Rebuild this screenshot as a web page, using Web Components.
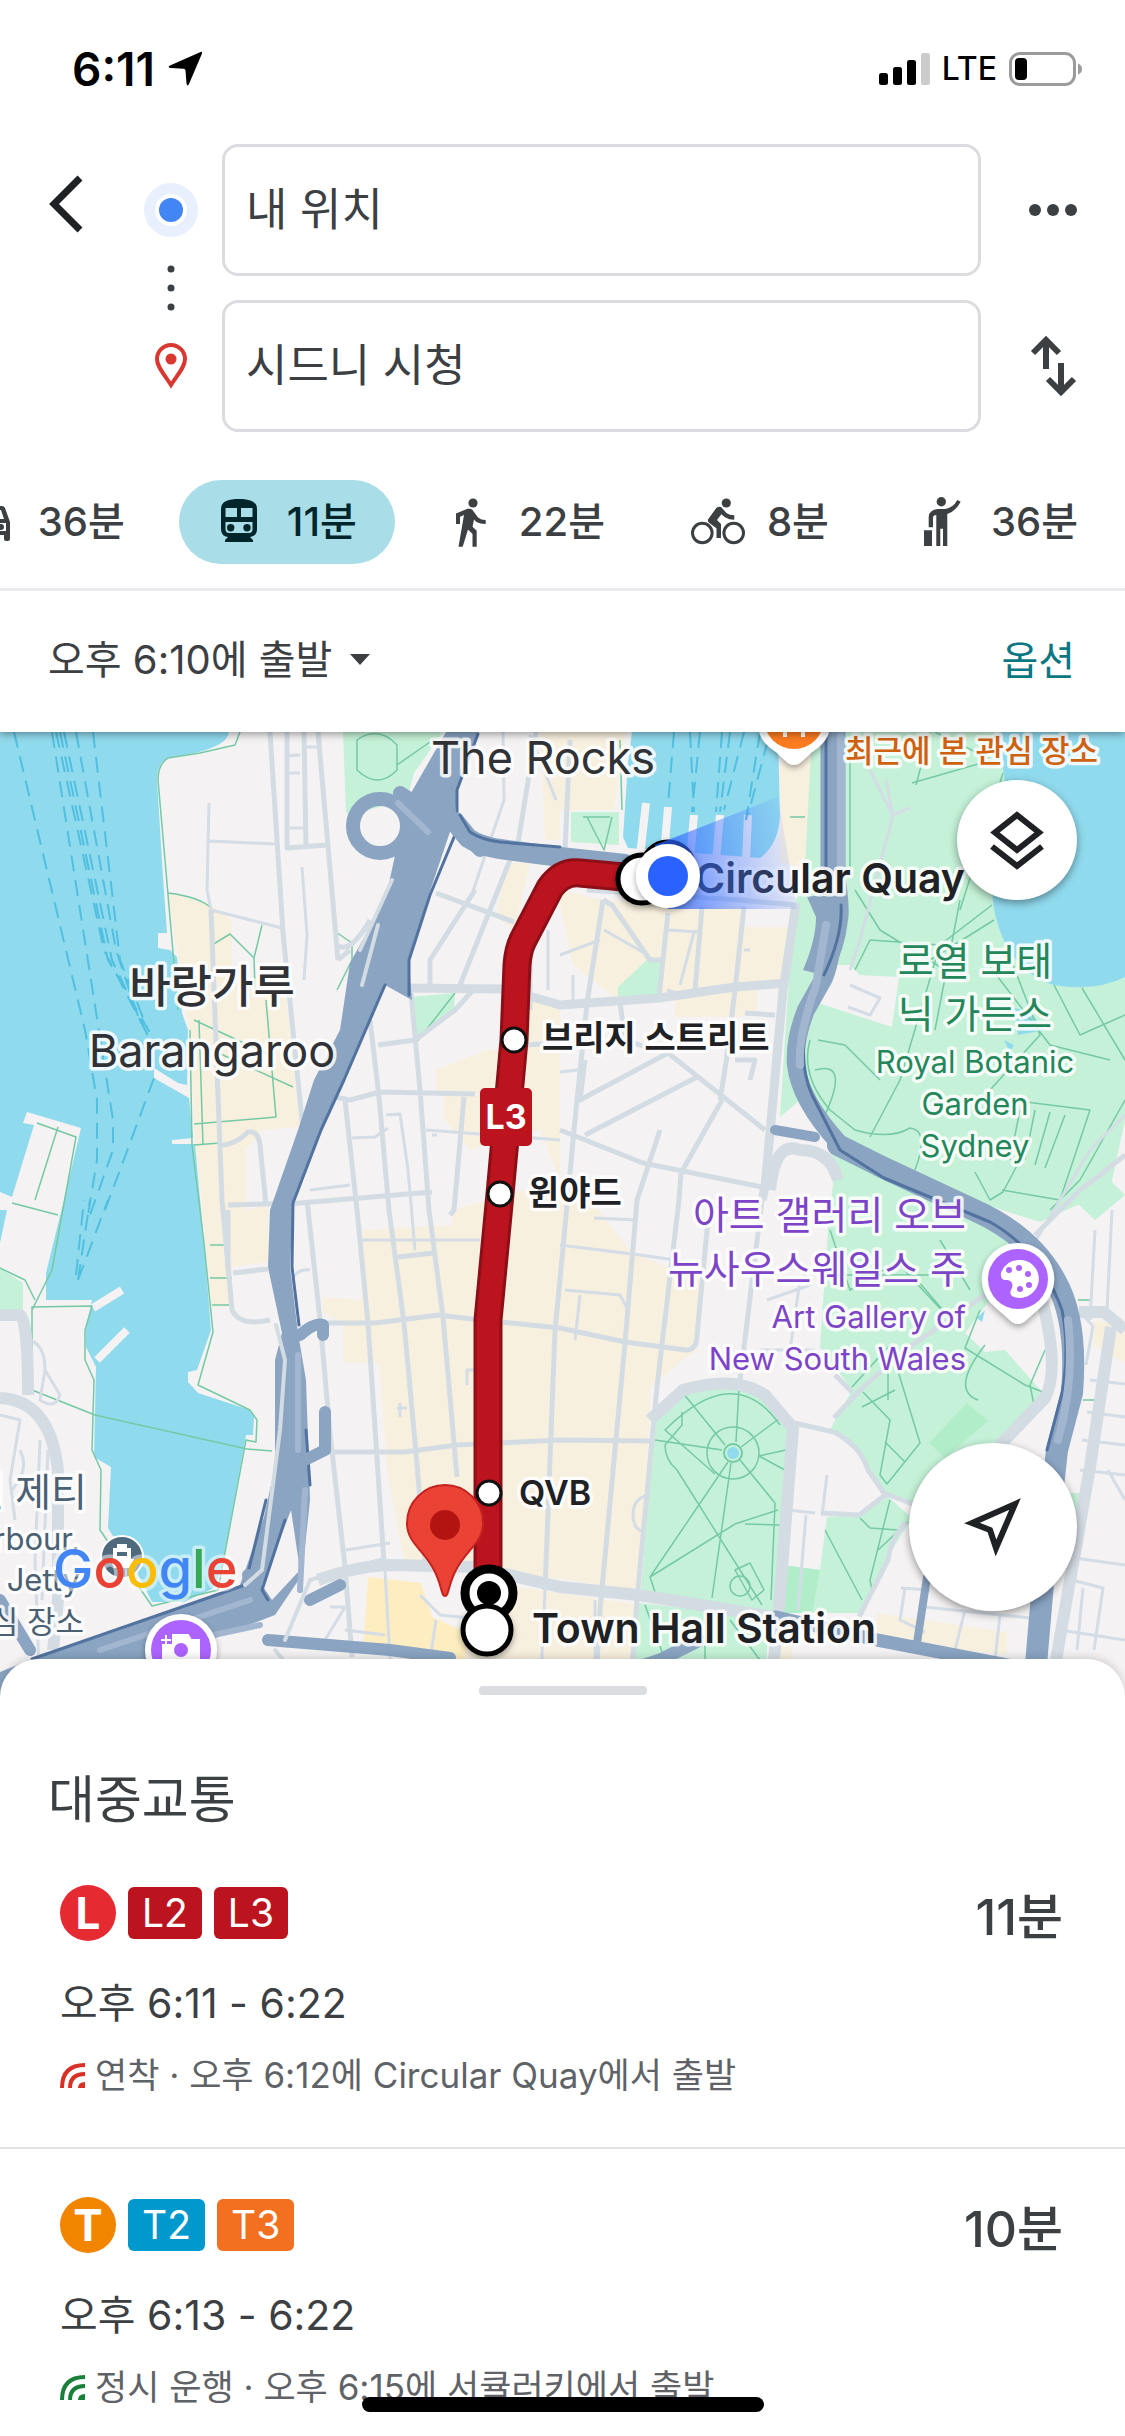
<!DOCTYPE html>
<html lang="ko">
<head>
<meta charset="utf-8">
<meta name="viewport" content="width=device-width, initial-scale=1">
<title>대중교통 길찾기</title>
<style>
	html, body { margin: 0; height: 100%; background: #fff; }
	body { font-family: Inter, "Noto Sans CJK KR", sans-serif; color: #3c4043; }
</style>
</head>
<body>
<transit-app>
	<status-bar slot="top" time="6:11" network="LTE"></status-bar>
	<trip-header slot="top" from="내 위치" to="시드니 시청"></trip-header>
	<mode-bar slot="top">
		<mode-chip icon="car">36분</mode-chip>
		<mode-chip icon="train" selected>11분</mode-chip>
		<mode-chip icon="walk">22분</mode-chip>
		<mode-chip icon="bike">8분</mode-chip>
		<mode-chip icon="hail">36분</mode-chip>
	</mode-bar>
	<depart-bar slot="top" when="오후 6:10에 출발">옵션</depart-bar>
	<route-map slot="map"></route-map>
	<result-sheet slot="sheet" heading="대중교통">
		<route-option letter="L" color="#e62a32" lines="L2:#bc141f,L3:#bc141f" duration="11분" live="#d93025">
			<span slot="time">오후 6:11 - 6:22</span>
			연착 · 오후 6:12에 Circular Quay에서 출발
		</route-option>
		<route-option letter="T" color="#f18500" lines="T2:#0098cd,T3:#f37021" duration="10분" live="#188038">
			<span slot="time">오후 6:13 - 6:22</span>
			정시 운행 · 오후 6:15에 서큘러키에서 출발
		</route-option>
	</result-sheet>
</transit-app>

<script>
const base = `
	:host, *, *::before, *::after { box-sizing: border-box; }
	button, input, select {
		font: inherit;
		color: inherit;
		background: none;
		border: none;
		margin: 0;
		padding: 0;
	}
	button { cursor: pointer; }
	svg { display: block; flex: none; }
`;

class TransitApp extends HTMLElement {
	constructor() {
		super();
		this.attachShadow({ mode: 'open' });
		this.shadowRoot.innerHTML = `
		<style>
			${base}
			:host {
				display: flex;
				flex-direction: column;
				position: relative;
				min-height: 100%;
				overflow: hidden;
			}
			.top { position: relative; z-index: 1; background: #fff; box-shadow: 0 2px 8px rgba(0, 0, 0, .4); }
			.map { flex: 1; display: flex; }
			.sheet { position: relative; margin-top: -40px; }
			.home {
				position: absolute;
				bottom: 24px;
				left: 50%;
				width: 402px;
				height: 15px;
				margin-left: -201px;
				border-radius: 8px;
				background: #000;
			}
		</style>
		<div class="top"><slot name="top"></slot></div>
		<div class="map"><slot name="map"></slot></div>
		<div class="sheet"><slot name="sheet"></slot></div>
		<div class="home"></div>
		`;
	}
}

class StatusBar extends HTMLElement {
	constructor() {
		super();
		this.attachShadow({ mode: 'open' });
	}

	connectedCallback() {
		this.shadowRoot.innerHTML = `
		<style>
			${base}
			:host {
				display: flex;
				align-items: center;
				gap: 12px;
				padding: 44px 42px 0 72px;
				line-height: 50px;
				color: #000;
			}
			.time { font-size: 46px; font-weight: 600; }
			.net { font-size: 32px; font-weight: 500; }
			.space { flex: 1; }
		</style>
		<span class="time">${this.getAttribute('time')}</span>
		<svg width="36" height="36" viewBox="0 0 36 36"><path d="M33 1.2Q36 0 34.8 3L22 33Q20.5 36 19.5 32.5L18.5 19.5Q18.4 17.8 16.7 17.7L3.5 17Q0 16.3 3 14.6Z"/></svg>
		<span class="space"></span>
		<svg width="51" height="34" viewBox="0 0 51 34">
			<rect y="21" width="9" height="12" rx="2.5"/>
			<rect x="14" y="15" width="9" height="18" rx="2.5"/>
			<rect x="28" y="8" width="9" height="25" rx="2.5"/>
			<rect x="42" y="1" width="9" height="32" rx="2.5" fill="#ccc"/>
		</svg>
		<span class="net">${this.getAttribute('network')}</span>
		<svg width="74" height="34" viewBox="0 0 74 34">
			<rect x="1.5" y="1.5" width="64" height="31" rx="9.5" fill="none" stroke="#9b9b9b" stroke-width="3"/>
			<rect x="6" y="6" width="12" height="22" rx="4"/>
			<path d="M69 11.5q4 1.5 4 5.5t-4 5.5z" fill="#9b9b9b"/>
		</svg>
		`;
	}
}

class TripHeader extends HTMLElement {
	constructor() {
		super();
		this.attachShadow({ mode: 'open' });
	}

	connectedCallback() {
		this.shadowRoot.innerHTML = `
		<style>
			${base}
			:host {
				display: grid;
				grid-template-columns: 120px 102px 1fr 144px;
				grid-template-rows: 132px 132px;
				row-gap: 24px;
				padding-top: 50px;
			}
			button { display: grid; place-items: center; }
			.rail { grid-column: 2; grid-row: 1 / 3; }
			input {
				min-width: 0;
				padding: 0 21px 8px;
				font-size: 45px;
				border: 3px solid #dadce0;
				border-radius: 16px;
				outline: none;
			}
			.back { grid-area: 1 / 1; }
			.from { grid-area: 1 / 3; }
			.more { grid-area: 1 / 4; }
			.to { grid-area: 2 / 3; }
			.swap { grid-area: 2 / 4; }
		</style>
		<button class="back" aria-label="뒤로">
			<svg width="60" height="72" viewBox="0 0 60 72"><path d="M50 4L24 30L50 56" fill="none" stroke="#202124" stroke-width="7"/></svg>
		</button>
		<svg class="rail" width="102" height="288" viewBox="0 0 102 288">
			<circle cx="51" cy="66" r="27" fill="#e8f0fe"/>
			<circle cx="51" cy="66" r="16" fill="#fff"/>
			<circle cx="51" cy="66" r="12" fill="#4285f4"/>
			<g fill="#3c4043"><circle cx="51" cy="125" r="3.5"/><circle cx="51" cy="144" r="3.5"/><circle cx="51" cy="163" r="3.5"/></g>
			<path d="M51 241C44 230 37 223 37 215A14 14 0 0 1 65 215C65 223 58 230 51 241Z" fill="none" stroke="#d93830" stroke-width="4"/>
			<circle cx="51" cy="215" r="5.5" fill="#d93830"/>
		</svg>
		<input class="from" aria-label="출발지" value="${this.getAttribute('from')}">
		<button class="more" aria-label="더보기">
			<svg width="50" height="14" viewBox="0 0 50 14" fill="#3c4043"><circle cx="7" cy="7" r="6"/><circle cx="25" cy="7" r="6"/><circle cx="43" cy="7" r="6"/></svg>
		</button>
		<input class="to" aria-label="도착지" value="${this.getAttribute('to')}">
		<button class="swap" aria-label="출발지와 도착지 바꾸기">
			<svg width="48" height="62" viewBox="0 0 48 62" fill="none" stroke="#3c4043" stroke-width="6"><path d="M17 34V6M4 18L17 5L30 18M32 28V56M19 44L32 57L45 44"/></svg>
		</button>
		`;
	}
}

class ModeBar extends HTMLElement {
	constructor() {
		super();
		this.attachShadow({ mode: 'open' });
		this.shadowRoot.innerHTML = `
		<style>
			:host {
				display: flex;
				justify-content: flex-end;
				gap: 16px;
				padding: 48px 9px 24px 0;
				border-bottom: 3px solid #e8eaed;
				overflow: hidden;
			}
		</style>
		<slot></slot>
		`;
	}
}

const modeIcons = {
	car: `<path fill-rule="evenodd" d="M14 11H40Q42 11 43 13L48 27V44Q48 46 46 46H44Q42 46 42 44V40H12V44Q12 46 10 46H8Q6 46 6 44V27L11 13Q12 11 14 11ZM15 15L12 24H42L39 15ZM10 28V36H44V28Z"/><circle cx="16" cy="32" r="3"/><circle cx="39" cy="32" r="3"/>`,
	train: `<path fill-rule="evenodd" d="M28 4C38 4 46 6 46 14V34Q46 41 39 42L42 45V47H14V45L17 42Q10 41 10 34V14C10 6 18 4 28 4ZM14.5 13V22H26V13ZM30 13V22H41.5V13ZM14.5 27V34Q14.5 38 18 38H38Q41.5 38 41.5 34V27Z"/><circle cx="19.7" cy="32.7" r="3.7"/><circle cx="36" cy="32.7" r="3.7"/>`,
	walk: `<circle cx="30" cy="8" r="4.6"/><path d="M13 29V18.5L24.5 13.7H27.5Q29.5 14 31 17L35 22.5Q38 25 42.7 25V29Q37 29 33.5 27L31 24.5L29.5 31.7L33.7 35.7V51.7H29.5V39L25 34.5L19.7 51.7H15.5L21 20L17 21.7V29Z"/>`,
	bike: `<circle cx="11.3" cy="38" r="9.8" fill="none" stroke="currentColor" stroke-width="3"/><circle cx="42.7" cy="38" r="9.8" fill="none" stroke="currentColor" stroke-width="3"/><circle cx="35.3" cy="8" r="4.6"/><path d="M17.3 24L25.3 13Q27.5 11 30 12L35.7 18.3Q38.5 20.3 43.3 20.3V24.8Q38 24.8 34 22.3L30.3 19.3L26 25L30 29V43H25.5V33.3L18 27.7Q16 26 17.3 24Z"/>`,
	hail: `<circle cx="26.3" cy="6.7" r="4.7"/><path d="M9 35.3H17V51H9ZM23 14H30Q38 13 42.3 5L45.7 6.7Q41 16 32.3 19V51H28V33.7H25.3V51H21.3V20Q18 20 18 23.3V32.3H13.7V21.7Q14 15 23 14Z"/>`
};

class ModeChip extends HTMLElement {
	constructor() {
		super();
		this.attachShadow({ mode: 'open' });
	}

	connectedCallback() {
		const selected = this.hasAttribute('selected');
		this.shadowRoot.innerHTML = `
		<style>
			${base}
			:host { display: block; flex: none; }
			button {
				display: flex;
				align-items: center;
				gap: 22px;
				height: 84px;
				padding: 0 38px 0 32px;
				border-radius: 42px;
				font-size: 40px;
				font-weight: 500;
				white-space: nowrap;
			}
			button[aria-pressed=true] { background: #a9dee8; color: #00262b; }
			.label { padding-bottom: 6px; }
		</style>
		<button aria-pressed="${selected}">
			<svg width="54" height="54" viewBox="0 0 54 54" fill="currentColor">${modeIcons[this.getAttribute('icon')]}</svg>
			<span class="label"><slot></slot></span>
		</button>
		`;
	}
}

class DepartBar extends HTMLElement {
	constructor() {
		super();
		this.attachShadow({ mode: 'open' });
	}

	connectedCallback() {
		this.shadowRoot.innerHTML = `
		<style>
			${base}
			:host {
				display: flex;
				align-items: center;
				justify-content: space-between;
				height: 141px;
				padding: 0 50px 4px 48px;
				font-size: 40px;
			}
			label { display: flex; align-items: center; gap: 16px; }
			select { appearance: none; outline: none; }
			.options { color: #0b7783; padding-bottom: 4px; }
		</style>
		<label>
			<select aria-label="출발 시간"><option>${this.getAttribute('when')}</option></select>
			<svg width="22" height="12" viewBox="0 0 22 12"><path d="M1 0H21L11 11Z" fill="#3c4043"/></svg>
		</label>
		<button class="options"><slot></slot></button>
		`;
	}
}

// the drawing uses page units, so its origin sits at y = 732
class RouteMap extends HTMLElement {
	constructor() {
		super();
		this.attachShadow({ mode: 'open' });
		this.shadowRoot.innerHTML = `
		<style>
			${base}
			:host { display: block; position: relative; flex: 1; min-height: 600px; background: #f4f2f3; }
			.canvas { position: absolute; inset: 0; width: 100%; height: 100%; }
			.fab {
				position: absolute;
				right: 48px;
				display: grid;
				place-items: center;
				border-radius: 50%;
				background: #fff;
				box-shadow: 0 3px 8px rgba(0, 0, 0, .4);
			}
			.layers { top: 48px; width: 120px; height: 120px; }
			.locate { bottom: 88px; width: 168px; height: 168px; }
			.water { fill: #90daee; }
			.park { fill: #c4f1d7; }
			.shops { fill: #f8f0df; }
			.roads, .minor, .major, .trails, .ferry, .highway { fill: none; stroke-linejoin: round; }
			.roads { stroke: #d4dce3; stroke-width: 5; }
			.minor { stroke: #d4dce6; stroke-width: 3; }
			.major { stroke: #d4dce3; stroke-width: 12; }
			.trails { stroke: #75c9a4; stroke-width: 1.5; }
			.ferry { stroke: #50bfe0; stroke-width: 2; stroke-dasharray: 16 9; }
			.highway { stroke: #8aa4c2; stroke-linecap: round; }
			.edge { stroke: #52739f; }
			.lane { stroke: #a2b6d0; }
			text {
				paint-order: stroke;
				stroke: #fff;
				stroke-opacity: .85;
				stroke-width: 7px;
				stroke-linejoin: round;
				fill: #303236;
			}
			.place { font-size: 45px; text-anchor: middle; }
			.ko.place { font-size: 45px; font-weight: 500; }
			.stop { font-size: 34px; font-weight: 600; fill: #202124; }
			.station { font-size: 41px; font-weight: 600; fill: #202124; }
			.ko { font-size: 39px; }
			.en { font-size: 31px; }
			.garden { fill: #23875a; text-anchor: middle; }
			.gallery { fill: #7d44c8; text-anchor: end; }
			.jetty { fill: #4a6073; text-anchor: end; }
			.recent { fill: #d0610f; font-size: 31px; font-weight: 500; }
			.logo { font-size: 54px; font-weight: 500; stroke-opacity: .5; }
			.badge { font-size: 34px; font-weight: 700; fill: #fff; stroke: none; text-anchor: middle; }
		</style>
		<svg class="canvas" viewBox="0 732 1125 967" preserveAspectRatio="xMidYMid slice">
			<defs>
				<linearGradient id="beam" gradientUnits="userSpaceOnUse" x1="668" y1="876" x2="792" y2="850">
					<stop offset="0" stop-color="#2962ff" stop-opacity=".75"/>
					<stop offset="1" stop-color="#5a86ff" stop-opacity=".1"/>
				</linearGradient>
				<filter id="drop" x="-30%" y="-30%" width="160%" height="160%"><feDropShadow dx="0" dy="3" stdDeviation="3" flood-opacity=".35"/></filter>
			</defs>
			<rect y="732" width="1125" height="967" fill="#f4f2f3"/>

			<g class="shops">
				<path d="M168 893L207 903L232 920V983L286 997L293 1063L300 1127L262 1130L246 1150V1210L268 1205V1262L232 1267V1307H212L195 1138L189 1030L178 957Z"/>
				<path d="M560 732H625L614 810H560ZM540 732H560V840H545ZM780 763L819 750L805 867L780 863Z"/>
				<path d="M560 890L603 900L744 907V927H790V977L757 985V1010L740 1017H675V998L618 1000L573 965L560 905Z"/>
				<path d="M507 863H530L514 930L496 917ZM486 1050L436 1070V1090L560 1100V1000H520V1050ZM445 1093L560 1100V1180L540 1130L470 1150L443 1117Z"/>
				<path d="M363 1230L452 1225V1210L560 1180L596 1207L632 1253L699 1280L697 1350L683 1360L650 1387V1413L639 1590L475 1567L404 1560L388 1477L379 1363H343V1323L323 1313V1297L361 1300Z"/>
				<path d="M470 1580L640 1605L632 1699H464ZM877 1613L1007 1632V1655L877 1640ZM1093 1320L1125 1325V1363L1093 1345ZM779 1617H793L790 1699H770Z"/>
				<path d="M368 1577L421 1583L432 1617L468 1633L464 1670L363 1650Z" fill="#fdedc0"/>
			</g>
			<path class="shops" d="M722 1380Q765 1380 795 1425L790 1540L783 1425Q760 1390 722 1386Z"/>

			<g class="park">
				<path d="M343 732H443L414 773L407 800L360 812L346 813ZM409 997L455 993L454 1010L416 1043ZM571 812H619V845L571 842ZM650 957L663 960L659 997L618 1000V987Z"/>
				<path d="M0 1018L8 1024L0 1048ZM0 1268L23 1283V1313H0Z"/>
				<path d="M812 732H1125V1120L1110 1190L1040 1222L970 1200L884 1167L834 1137L800 1100L780 1117L790 960L796 900L805 865Z"/>
				<path d="M828 1140L890 1180L1000 1225L1045 1270L1040 1310L965 1333L985 1352L1005 1350L1043 1393L1000 1440L950 1510L910 1503L884 1493L863 1457L830 1430L852 1390L820 1347L828 1230Z"/>
				<path d="M1074 1200L1110 1180L1125 1195L1095 1220ZM1070 1493H1080L1076 1530H1068Z"/>
				<path d="M655 1417L683 1393Q722 1380 755 1392L776 1410L789 1427L783 1517L773 1613L641 1590ZM639 1603L767 1617V1699H630Z"/>
				<path d="M827 1517L859 1515L888 1497L912 1518L892 1550L859 1613H780L783 1565L820 1570Z"/>
				<path d="M783 1565L820 1570L812 1613H779ZM967 1403L988 1421L945 1458L929 1443Z" fill="#b2edca"/>
			</g>
			<path d="M825 965L850 965L860 975L899 977L892 1027L818 1003Z" fill="#f4f2f3"/>
			<path d="M965 1333L990 1300L1040 1270L1046 1375L1010 1350Z" fill="#f4f2f3"/>
			<path d="M828 1140L834 1175L828 1230L780 1240L770 1170L790 1147Z" fill="#f4f2f3"/>

			<g class="water">
				<path d="M0 732H229Q228 745 195 753L168 758Q157 762 157 780L163 877L167 933H158V948L170 950L177 957L182 1013L188 1030L187 1085L178 1083L154 1068V1078L189 1098L193 1138L172 1140V1144H195L204 1243L211 1330L197 1370L188 1372V1382L198 1393L250 1410L254 1417L253 1435H246L236 1490L222 1567L214 1588L184 1602H152L141 1580L108 1528L111 1467L94 1457L96 1367L86 1347V1330L92 1300H46V1273L64 1200L81 1128L27 1112L23 1123L34 1125L12 1197L0 1192Z"/>
				<path d="M0 1210H7L0 1243ZM632 732H778L780 817Q778 845 760 858L628 848L623 837L628 763Z"/>
				<path d="M998 732H1125V977Q1095 992 1054 985Q1030 978 1014 957Q994 930 992 890L1007 797Z"/>
				<path d="M1015 1008L1030 1012L1045 1030L1018 1035ZM1004 1040L1014 1045L1010 1052ZM977 1318L985 1310L982 1322Z"/>
			</g>
			<path d="M93 1308L122 1290M97 1360L127 1330M646 803L640 856M668 807L664 856M694 815L690 860M720 815L716 860M748 815L746 860" stroke="#f4f2f3" stroke-width="8"/>

			<g class="ferry">
				<path d="M14 732L85 1030L97 1100V1160L88 1215M52 732L102 1050L113 1120V1150L90 1215M93 732L120 960L148 1030M154 1078L120 1170L103 1215M60 732L108 960L150 1033M64 732L112 960L148 1036M56 732L104 950L145 1030M76 732L116 950L140 1022"/>
				<path d="M78 1280L90 1200M76 1275L84 1200M78 1280L108 1200M674 732L668 805M700 732L692 812M722 732L716 812M744 732L724 810M760 732L746 820M690 732L694 812M730 732L720 812M768 740L748 815"/>
			</g>

			<g class="trails">
				<path d="M240 732L235 745L200 753L168 758Q158 764 158 780L165 860L178 1010M168 893Q200 897 211 908M212 945L230 934L254 958L262 925M254 958L255 990M190 1030L192 1145L204 1243L213 1332L198 1385L250 1410L257 1420L256 1442L246 1440L218 1590L152 1606L100 1530L101 1470L92 1450L94 1380L85 1360V1330L92 1306L32 1307L32 1390L95 1415L247 1449L272 1451M190 1040L293 1087M194 1020L270 1055M266 1000L276 1117L194 1124M194 1145L220 1143M199 1020L203 1145M357 740Q378 725 397 745V770Q378 790 357 770ZM397 765L430 742M333 930L352 943V960L337 990M37 1123L76 1137L52 1270L32 1310M58 1127L35 1200M12 1203L58 1215M0 1268L25 1280L35 1300M210 1245H228M210 1278H232M212 1305H232"/>
				<path d="M850 745V870M855 890L880 930L945 970M912 783L992 760L935 732M930 732L916 785M1003 773L960 910M992 905L940 945L870 940M870 940L855 970M940 945L900 1080L870 1137M960 900L935 1030M994 920L930 960M985 960L1050 1045L1110 1060M1010 957L1040 1035L990 1090M1054 985L1080 1035L1125 1015M1082 988L1125 1060M818 1040L845 1045L880 1080M810 1040Q800 1075 830 1110L855 1130Q890 1140 910 1128Q930 1130 915 1170M815 1070Q850 1060 825 1115M1010 1100L1090 1110L1060 1200L1002 1190M1020 1110L1010 1160M1035 1110L1025 1160M1050 1112L1035 1165M1065 1115L1045 1168M1125 1100L1080 1180L1050 1210M975 1172L990 1200L1003 1192L1020 1160M583 817H610M587 817L604 850L612 817M790 817H805M620 740L622 810M455 993L416 1043"/>
				<path d="M830 1230L850 1290L900 1260L960 1330L895 1260M830 1275H950M940 1240L970 1290M980 1310L965 1348L1025 1385L1043 1392M985 1345Q950 1390 978 1400M863 1392L890 1420L880 1475L887 1484L920 1443L890 1345L852 1387M885 1442L905 1462M862 1407L895 1390M888 1350V1400M1045 1350L1030 1385L1035 1410L1010 1430M860 1518L870 1528L898 1530M890 1500L870 1580L872 1590M908 1522L878 1550M825 1530L862 1600M1078 1300H1092M1083 1400H1100"/>
				<circle cx="733" cy="1453" r="26"/>
				<path d="M683 1393L725 1445M739 1387L736 1442M780 1418L741 1447M786 1450L759 1456L785 1470M740 1460L775 1503L771 1600M731 1463L712 1598M728 1462L650 1577L735 1524L778 1510M715 1474L665 1430Q735 1360 780 1425M655 1440L722 1450M682 1412V1425L665 1445Q665 1460 677 1470L762 1605M745 1524L780 1525M650 1577L655 1592"/>
				<path d="M735 1570L750 1563L764 1590L752 1600Z"/><circle cx="740" cy="1586" r="10"/>
				<path d="M645 1605L665 1660M705 1620V1699M730 1620L760 1660"/>
			</g>
			<circle cx="733" cy="1453" r="9" class="park" stroke="#75c9a4" stroke-width="2"/>
			<circle cx="733" cy="1453" r="6" class="water"/>

			<g class="minor">
				<path d="M209 803L207 890L211 910M209 841L275 844M211 910L282 928M302 867L307 935L304 980M285 756L300 755M285 773H300M290 828H304M302 747H320M503 732L504 800L470 900M556 800L530 735M386 1115L400 1114L408 1170L415 1250M352 1138L375 1137L388 1128M432 1135H437M426 1130L560 1140M310 1190L350 1185M290 1285Q295 1268 310 1270M346 1550L390 1543M360 1240H480M475 1370H467V1385M400 1403V1417M397 1408H407M548 930V990M560 955L600 940M604 930L648 955M668 930L700 932M744 950H750M573 975V1000M667 990L680 994M694 932L680 985M560 1072L578 1070M594 1218L637 1220M560 1245L640 1255L690 1262M565 1290L620 1295L628 1310M580 1295L575 1340M650 1495Q633 1497 633 1515Q633 1530 645 1532M827 1475L822 1515M806 1515L798 1610M788 1510L815 1513M767 1300L810 1285L795 1255M760 1350H815M800 1280L790 1350"/>
				<path d="M1080 1470L1125 1475M1090 1380L1125 1384M1087 1412L1125 1417M1082 1440L1125 1445M1075 1558L1125 1565M1072 1580L1103 1588L1094 1650M1060 1630L1125 1640M1083 1588L1077 1650M1108 1470L1125 1500M1095 1230L1090 1320M1112 1210L1107 1310M1080 1312L1093 1326L1086 1365M901 1588L930 1590M905 1588L900 1620L925 1632M925 1607L1050 1620M965 1610L955 1650M1000 1615L995 1660M345 1607L325 1640M330 1607H345M345 1630L385 1635M385 1570L390 1660M420 1595L440 1615L470 1618M436 1620L430 1660M545 1590L540 1699M595 1600V1699"/>
				<path d="M30 1340Q45 1345 45 1370L60 1395Q55 1410 40 1400L45 1370M0 1415L20 1420L10 1480L15 1520M20 1450Q30 1470 12 1490M40 1440L35 1560L40 1699M48 1450L42 1600"/>
				<path d="M850 985L880 998L870 1015L848 1007M870 770L885 800L893 815L860 940L850 970M893 815L910 808M886 780L893 815M1125 1115L1090 1150L1030 1250"/>
			</g>
			<g class="roads">
				<path d="M270 732L283 933L303 1130M318 732L338 960M287 732V848L327 845M304 732L306 848M211 910L222 1200L232 1310Q240 1327 270 1320M221 1145Q235 1145 248 1132Q258 1130 260 1145L266 1205M338 960L350 950M337 945Q350 955 370 920"/>
				<path d="M345 1100L357 1210L368 1323L384 1563M370 1020L379 1097L389 1210L404 1323L416 1453L425 1560M411 993L420 1090L429 1210L443 1317L457 1477M464 1097L454 1210L450 1215M307 1200L320 1320L330 1433L345 1567L352 1657M335 1097L350 1100L380 1092L475 1094M378 1045L415 1040L455 1010L475 988M228 1205L300 1203L432 1192M233 1273L268 1269M398 1257L434 1253M228 1210V1270"/>
				<path d="M536 732L518 843M436 893L514 922M510 860L460 985M475 890L430 960V988M560 1328L625 1342L686 1350Q697 1350 697 1335L708 1220M321 1323H375L439 1315L480 1320L560 1328M332 1452H404L457 1445L560 1440L654 1441M555 1330L545 1590M560 1043L525 1045M530 955V1010M570 740L565 850"/>
				<path d="M603 900L587 1003L574 1130L560 1280L555 1330M660 1130L637 1200L625 1343L600 1610L595 1699M679 1200L657 1387L637 1600L630 1699M762 1200L740 1380M702 907L695 990M744 907L735 990L726 1063L720 1100M668 913L663 960L659 997M603 900L612 905L650 960L663 960M668 1053L765 1130M668 1053L580 1100L585 1060M697 1077L585 1135M722 1100L681 1173L679 1200M560 1130L643 1163L762 1187M587 890L740 900L796 905M735 1060H755L750 1080M745 1013L775 1015M620 1002L625 1040L655 1050"/>
				<path d="M794 1423L834 1432Q860 1445 868 1470L884 1493L910 1503L960 1512M888 1493L859 1515L821 1513M906 1522Q890 1540 888 1560L859 1617M834 1418L860 1390L905 1350L985 1295M835 1375L852 1392M1125 1155L1100 1175L1080 1190L1035 1235"/>
			</g>
			<g class="major">
				<path stroke-width="9" d="M405 988L505 989L560 1005L659 998L735 987L787 983M796 903L783 990L765 1187L762 1200"/>
				<path d="M318 1580Q360 1565 393 1565L475 1567L560 1587L639 1595L773 1617M650 1420L683 1390Q735 1375 765 1395L793 1428L778 1620L770 1699M1042 1300Q1060 1370 1045 1398L1000 1445M1079 1312H1104L1125 1330M1111 1327L1090 1467L1059 1643L1050 1699M0 1398Q50 1400 58 1470V1600L53 1650M0 1315H20Q28 1320 28 1395M770 1190Q775 1140 800 1150Q830 1150 838 1180"/>
			</g>

			<!-- western distributor and its ramps -->
			<circle cx="380" cy="826" r="27" class="highway" stroke-width="14"/>
			<path d="M400 793L450 825M455 825L480 850" class="highway" stroke-width="14"/>
			<path d="M446 732H478L457 790L455 817L428 897L409 963L412 1000L385 985L366 1030L343 1080L320 1130L293 1200L290 1267L298 1333L306 1380L309 1467L310 1500L302 1575L275 1615L170 1655L120 1675L0 1699V1672L32 1659L120 1630L240 1585L264 1517L275 1467L275 1360L282 1333L268 1267L270 1210L298 1130L314 1080L340 1030L350 963L386 897L407 800Z" fill="#8aa4c2"/>
			<path d="M291 1510L300 1570L272 1600L262 1585Z" fill="#f4f2f3"/>
			<g class="highway">
				<path class="edge" stroke-width="3" d="M478 734L457 790V830L430 895L409 960V995M385 985L344 1080L321 1130L293 1203L292 1267L299 1325M306 1430L310 1485M266 1500L245 1585L32 1659M285 1520L262 1590L268 1600"/>
				<path stroke-width="12" d="M300 1335Q315 1322 323 1325V1335M305 1460L325 1450V1412M248 1575L258 1610M310 1600L340 1585M268 1640L390 1650L450 1658M0 1600L30 1650"/>
				<path class="lane" stroke-width="6" d="M398 803L428 832M298 1355V1450M305 1490L300 1590M250 1600L100 1650M260 1625L190 1640"/>
				<path stroke="#d4dce3" stroke-width="4" d="M392 880L360 950M378 925L362 985M276 1325L285 1360L280 1430L262 1570L245 1585M380 1560L310 1580L285 1640M275 1650L300 1680"/>
				<path stroke-width="20" d="M455 822L468 838Q480 846 500 849L560 857L625 864"/>
				<path class="edge" stroke-width="3" d="M460 815L470 832Q482 840 500 842L560 847"/>
			</g>

			<!-- eastern distributor -->
			<path d="M820 880H846Q850 910 848 920Q845 950 830 977L803 970Q816 940 816 917L807 897L820 895Z" fill="#8aa4c2"/>
			<g class="highway">
				<path stroke-width="25" d="M833 732V890"/>
				<path stroke-width="18" d="M833 905Q835 950 824 978L806 1010Q794 1040 796 1065Q800 1100 838 1142"/>
				<path stroke-width="22" d="M838 1145L884 1168L974 1210Q1030 1235 1055 1280Q1078 1320 1072 1393L1057 1450L1045 1560L1033 1699"/>
				<path stroke-width="10" d="M775 1130L815 1137"/>
				<path class="edge" stroke-width="3" d="M826 735V890M841 905Q843 935 824 975M814 990Q794 1055 812 1095L840 1150L884 1178L990 1222Q1040 1250 1062 1310Q1070 1350 1062 1393L1047 1450"/>
				<path class="lane" stroke-width="8" d="M841 736V880M826 925L816 985Q798 1035 800 1065M1068 1320Q1075 1380 1058 1440"/>
				<path stroke-width="13" d="M776 1617L877 1640L1007 1665L1033 1670M700 1640L660 1660L630 1670"/>
				<path stroke-width="8" d="M927 1577L917 1643"/>
			</g>

			<path d="M634 878L580 873Q562 871 550 888L523 940Q518 950 517 965L514 1040L500 1194L488 1320L488 1590" fill="none" stroke="#8c0f18" stroke-width="29" stroke-linejoin="round"/>
			<path d="M634 878L580 873Q562 871 550 888L523 940Q518 950 517 965L514 1040L500 1194L488 1320L488 1590" fill="none" stroke="#bc141f" stroke-width="23" stroke-linejoin="round"/>

			<text class="place" x="543" y="774">The Rocks</text>
			<text class="ko place" x="212" y="1003">바랑가루</text>
			<text class="place" x="212" y="1067">Barangaroo</text>
			<text class="recent" x="845" y="762">최근에 본 관심 장소</text>
			<text class="ko garden" x="975" y="975">로열 보태</text>
			<text class="ko garden" x="975" y="1028">닉 가든스</text>
			<text class="en garden" x="975" y="1073">Royal Botanic</text>
			<text class="en garden" x="975" y="1115">Garden</text>
			<text class="en garden" x="975" y="1157">Sydney</text>
			<text class="ko gallery" x="966" y="1229">아트 갤러리 오브</text>
			<text class="ko gallery" x="966" y="1283">뉴사우스웨일스 주</text>
			<text class="en gallery" x="966" y="1328">Art Gallery of</text>
			<text class="en gallery" x="966" y="1370">New South Wales</text>
			<text class="ko jetty" x="87" y="1506">린 제티</text>
			<text class="en jetty" x="80" y="1550">rbour,</text>
			<text class="en jetty" x="80" y="1591">n Jetty</text>
			<text class="en jetty" x="84" y="1633">심 장소</text>
			<text class="station" x="965" y="893" text-anchor="end">Circular Quay</text>
			<text class="stop" x="542" y="1050">브리지 스트리트</text>
			<text class="stop" x="528" y="1205">윈야드</text>
			<text class="stop" x="519" y="1505">QVB</text>
			<text class="station" x="532" y="1643">Town Hall Station</text>

			<g fill="#fff" stroke="#111" stroke-width="3">
				<circle cx="514" cy="1040" r="12"/>
				<circle cx="500" cy="1194" r="12"/>
				<circle cx="489" cy="1493" r="12"/>
			</g>
			<rect x="480" y="1088" width="52" height="58" rx="5" fill="#bc141f"/>
			<text class="badge" x="506" y="1129">L3</text>

			<g filter="url(#drop)">
				<circle cx="668" cy="868" r="28" fill="#fff"/>
				<circle cx="668" cy="868" r="26" fill="none" stroke="#000" stroke-width="5"/>
				<circle cx="642" cy="879" r="24" fill="#fff" stroke="#000" stroke-width="5"/>
			</g>
			<path d="M655 845L778 797L797 909H668Z" fill="url(#beam)"/>
			<g filter="url(#drop)">
				<circle cx="668" cy="876" r="32" fill="#fff"/>
			</g>
			<circle cx="668" cy="876" r="20" fill="#2962ff"/>

			<path d="M445 1596C441 1596 442 1585 434 1570C424 1550 407 1543 407 1523A38 38 0 0 1 483 1523C483 1543 466 1550 456 1570C448 1585 449 1596 445 1596Z" fill="#ea4335" stroke="#c5221f" stroke-width="2"/>
			<circle cx="445" cy="1525" r="15" fill="#b31412"/>
			<circle cx="489" cy="1593" r="24" fill="#fff" stroke="#000" stroke-width="9"/>
			<circle cx="489" cy="1593" r="12" fill="#000"/>
			<circle cx="487" cy="1630" r="24" fill="#fff" stroke="#000" stroke-width="5" filter="url(#drop)"/>

			<g filter="url(#drop)">
				<path d="M758 728H830Q828 742 812 752L800 763Q794 767 788 763L776 752Q760 742 758 728Z" fill="#fff"/>
				<path d="M1018 1243A36 36 0 0 1 1042 1306L1024 1322Q1018 1326 1012 1322L994 1306A36 36 0 0 1 1018 1243Z" fill="#fff"/>
				<circle cx="181" cy="1650" r="36" fill="#fff"/>
			</g>
			<circle cx="794" cy="719" r="30" fill="#fc7c20"/>
			<path d="M785 725V737M803 725V737" stroke="#fff" stroke-width="4"/>
			<circle cx="1018" cy="1279" r="30" fill="#ad63ff"/>
			<path d="M1018 1260A19 19 0 1 1 1014 1297Q1008 1295 1012 1288Q1014 1281 1007 1280Q1000 1281 1001 1273Q1005 1261 1018 1260Z" fill="#fff"/>
			<g fill="#ad63ff"><circle cx="1009" cy="1270" r="3"/><circle cx="1019" cy="1268" r="3"/><circle cx="1028" cy="1274" r="3"/><circle cx="1029" cy="1285" r="3"/><circle cx="1020" cy="1289" r="3"/></g>
			<circle cx="181" cy="1650" r="30" fill="#ad63ff"/>
			<path d="M173 1635H188L191 1640H199V1668H163V1645H173ZM166 1635V1645M161 1640H171" fill="#fff" stroke="#fff" stroke-width="2"/>
			<circle cx="181" cy="1650" r="7" fill="#ad63ff"/>
			<circle cx="122" cy="1557" r="21" fill="#4f697d" stroke="#fff" stroke-width="2"/>
			<path d="M117 1544H127V1548H131V1559H134L130 1568H114L110 1559H113V1548H117ZM117 1552V1556H127V1552Z" fill="#fff" fill-rule="evenodd"/>

			<text class="logo" x="53" y="1588"><tspan fill="#4285f4">G</tspan><tspan fill="#ea4335">o</tspan><tspan fill="#fbbc04">o</tspan><tspan fill="#4285f4">g</tspan><tspan fill="#34a853">l</tspan><tspan fill="#ea4335">e</tspan></text>
		</svg>
		<button class="fab layers" aria-label="지도 유형">
			<svg width="56" height="60" viewBox="0 0 56 60" fill="none" stroke="#202124" stroke-width="6"><path d="M28 5L50 22.5L28 40L6 22.5ZM3 36.5L28 56L53 36.5"/></svg>
		</button>
		<button class="fab locate" aria-label="현재 위치">
			<svg width="58" height="58" viewBox="0 0 58 58" fill="none" stroke="#202124" stroke-width="6"><path d="M51 6L32 50L26 32L8 25Z"/></svg>
		</button>
		`;
	}
}

class ResultSheet extends HTMLElement {
	constructor() {
		super();
		this.attachShadow({ mode: 'open' });
	}

	connectedCallback() {
		this.shadowRoot.innerHTML = `
		<style>
			${base}
			:host {
				display: block;
				background: #fff;
				border-radius: 38px 38px 0 0;
				box-shadow: 0 -2px 8px rgba(0, 0, 0, .15);
			}
			.handle {
				width: 168px;
				height: 9px;
				margin: 0 auto;
				border-radius: 4px;
				background: #dadce0;
			}
			header { padding-top: 27px; }
			h2 {
				margin: 70px 48px 2px;
				font-size: 51px;
				font-weight: 400;
				line-height: 70px;
			}
			::slotted(route-option:not(:last-child)) { border-bottom: 2px solid #e0e2e5; padding-bottom: 50px; }
		</style>
		<header>
			<div class="handle"></div>
			<h2>${this.getAttribute('heading')}</h2>
		</header>
		<slot></slot>
		`;
	}
}

class RouteOption extends HTMLElement {
	constructor() {
		super();
		this.attachShadow({ mode: 'open' });
	}

	renderLines() {
		return this.getAttribute('lines').split(',').map(line => {
			const [name, color] = line.split(':');
			return `<span class="line" style="background:${color}">${name}</span>`;
		}).join('');
	}

	connectedCallback() {
		this.shadowRoot.innerHTML = `
		<style>
			${base}
			:host { display: block; padding: 48px 62px 27px 60px; }
			.top, .live { display: flex; align-items: center; }
			.top { gap: 12px; height: 56px; }
			.agency {
				width: 56px;
				border-radius: 50%;
				background: ${this.getAttribute('color')};
				color: #fff;
				font-size: 44px;
				font-weight: 700;
				line-height: 56px;
				text-align: center;
			}
			.line {
				padding: 0 14px;
				border-radius: 6px;
				color: #fff;
				font-size: 39px;
				line-height: 52px;
			}
			.duration { margin-left: auto; font-size: 50px; font-weight: 500; }
			.time { margin-top: 36px; font-size: 41px; line-height: 52px; }
			.live { gap: 10px; margin-top: 24px; font-size: 35px; line-height: 44px; color: #5f6368; white-space: nowrap; }
		</style>
		<div class="top">
			<span class="agency">${this.getAttribute('letter')}</span>
			${this.renderLines()}
			<span class="duration">${this.getAttribute('duration')}</span>
		</div>
		<div class="time"><slot name="time"></slot></div>
		<div class="live">
			<svg width="25" height="25" viewBox="0 0 25 25" fill="none" stroke="${this.getAttribute('live')}" stroke-width="4"><path d="M2 25Q2 2 25 2M10 25Q10 11 25 11"/><path d="M18 25Q18 19 25 19V25Z" fill="${this.getAttribute('live')}" stroke="none"/></svg>
			<span><slot></slot></span>
		</div>
		`;
	}
}

customElements.define('transit-app', TransitApp);
customElements.define('status-bar', StatusBar);
customElements.define('trip-header', TripHeader);
customElements.define('mode-bar', ModeBar);
customElements.define('mode-chip', ModeChip);
customElements.define('depart-bar', DepartBar);
customElements.define('route-map', RouteMap);
customElements.define('result-sheet', ResultSheet);
customElements.define('route-option', RouteOption);
</script>
</body>
</html>
